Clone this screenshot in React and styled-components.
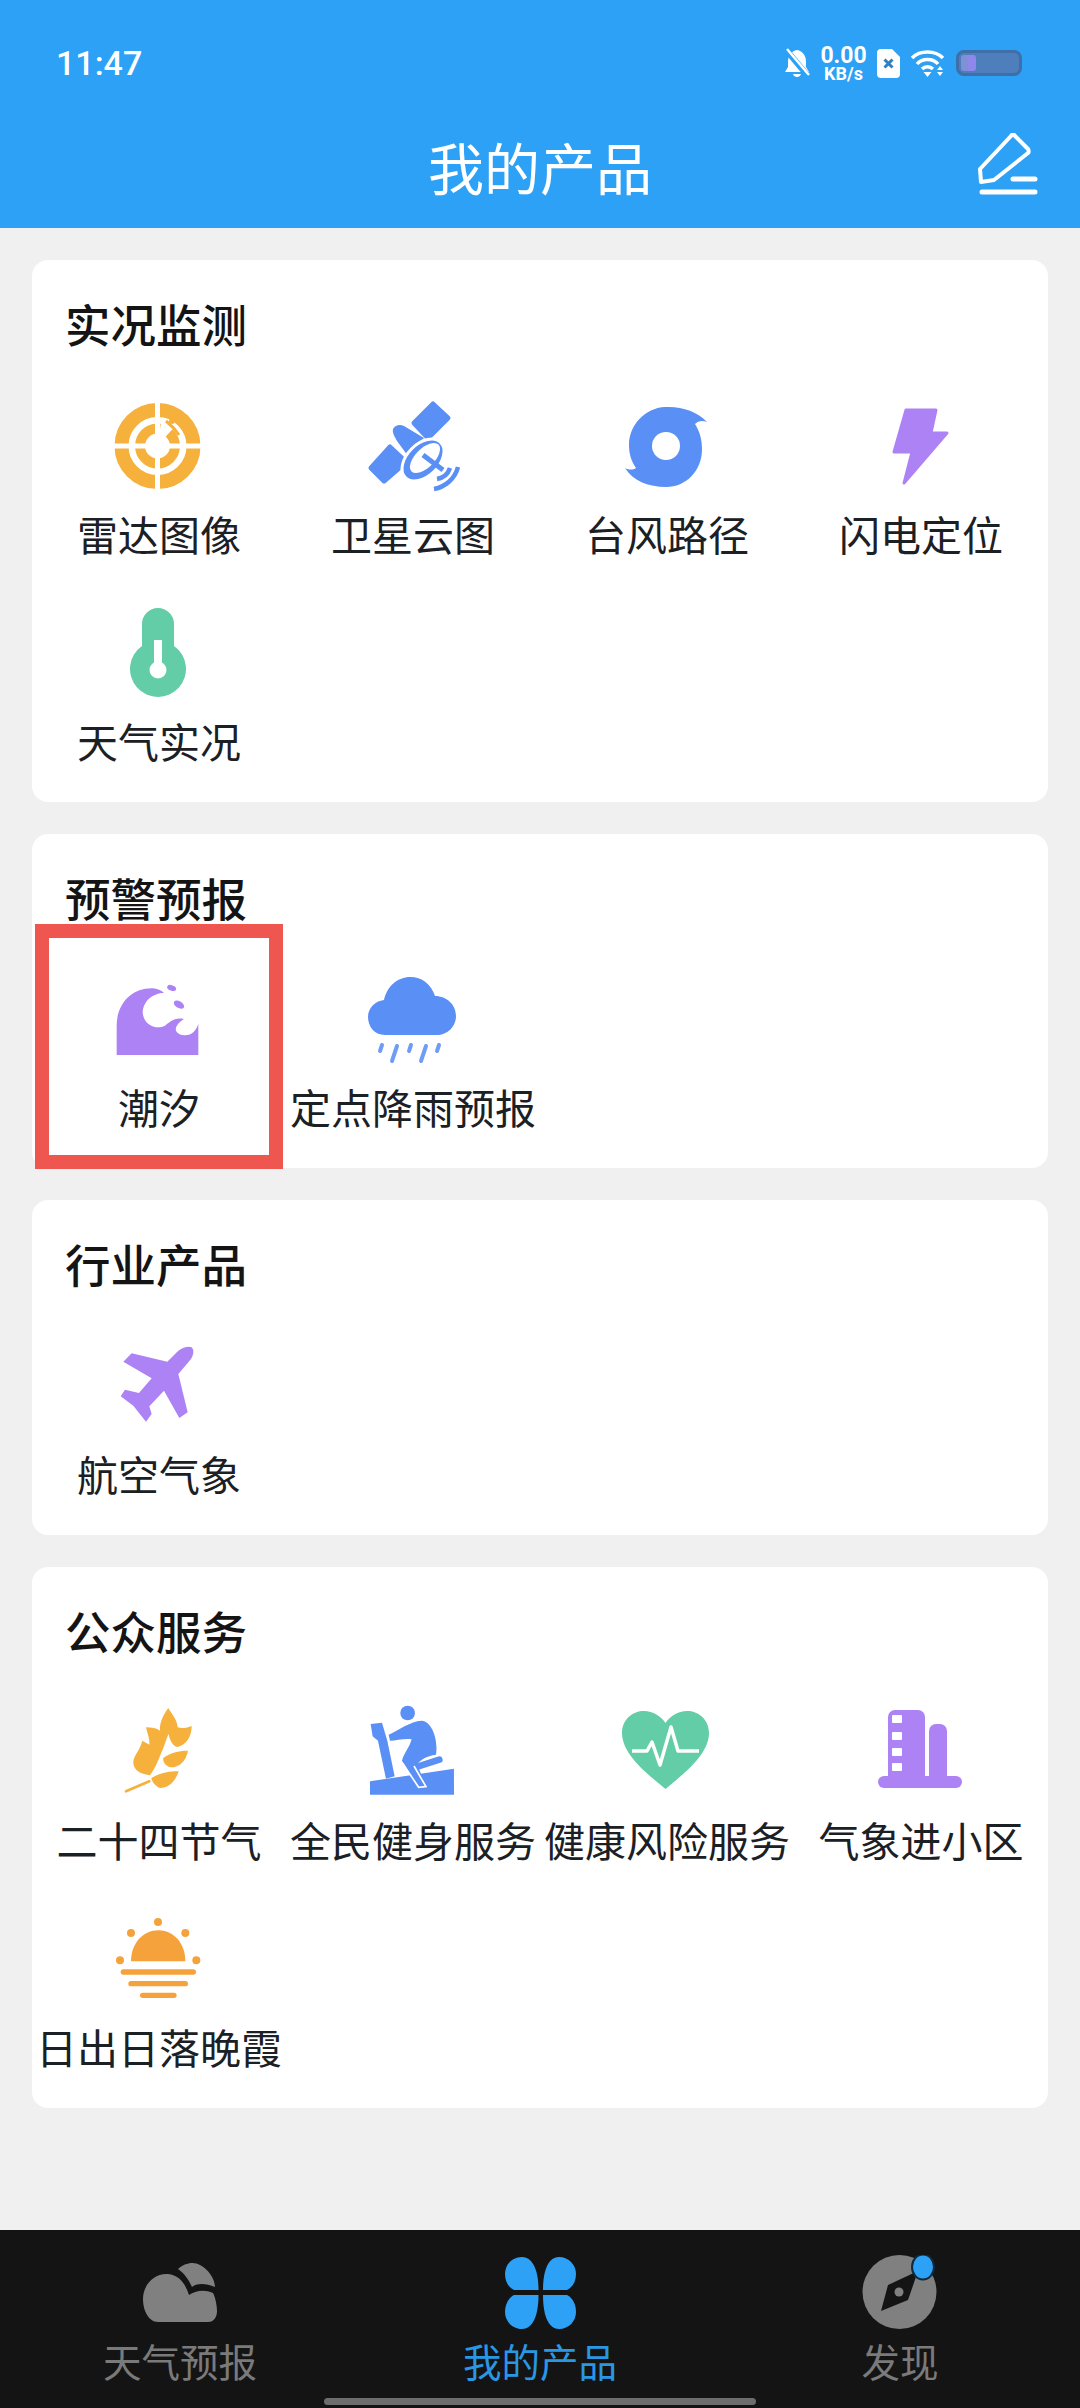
import React from 'react'
import styled, { createGlobalStyle } from 'styled-components'

const GlobalStyle = createGlobalStyle`
  html, body {
    margin: 0;
    padding: 0;
    background: #f0f0f0;
  }
  * {
    box-sizing: border-box;
  }
`

const Page = styled.div`
  width: 1080px;
  height: 2408px;
  display: flex;
  flex-direction: column;
  overflow: hidden;
  font-family: 'Noto Sans CJK SC', 'Noto Sans', sans-serif;
`

const Header = styled.header`
  height: 228px;
  flex-shrink: 0;
  background: #2ca1f6;
  color: white;
`

const StatusBar = styled.div`
  height: 126px;
  padding: 0 58px 0 56px;
  display: flex;
  align-items: center;
  justify-content: space-between;
`

const Clock = styled.div`
  font-family: Roboto, sans-serif;
  font-weight: 500;
  font-size: 34px;
`

const StatusIcons = styled.div`
  display: flex;
  align-items: center;
  gap: 11px;
`

const Speed = styled.div`
  width: 45px;
  display: flex;
  flex-direction: column;
  align-items: center;
  font-family: Roboto, sans-serif;
  font-weight: 700;
  font-size: 23px;
  line-height: 21px;

  span {
    font-size: 18px;
    line-height: 16px;
  }
`

const Battery = styled.div`
  width: 66px;
  height: 26px;
  padding: 2px;
  border: 3px solid #3f6fa9;
  border-radius: 8px;
  background: #4f7ebc;
`

const BatteryFill = styled.div`
  height: 100%;
  border-radius: 3px;
  background: linear-gradient(90deg, #7f90d4 50%, #8e87ec 50%);
`

const NavBar = styled.div`
  height: 80px;
  display: grid;
  grid-template-columns: 1fr auto 1fr;
  align-items: center;
`

const NavTitle = styled.h1`
  grid-column: 2;
  margin: 0;
  font-size: 56px;
  font-weight: 400;
  line-height: 80px;
`

const EditButton = styled.div`
  justify-self: end;
  margin-right: 42px;
  display: flex;
`

const Main = styled.main`
  flex: 1;
  padding: 32px 32px 0;
  display: flex;
  flex-direction: column;
  gap: 32px;
`

const Card = styled.section`
  background: white;
  border-radius: 16px;
`

const CardTitle = styled.h2`
  margin: 0;
  height: 127.5px;
  padding: 32px 0 0 33px;
  font-size: 45.5px;
  font-weight: 500;
  line-height: 62px;
  color: #141414;
`

const Grid = styled.div`
  display: grid;
  grid-template-columns: repeat(4, 254px);
  grid-auto-rows: 207px;
`

const Cell = styled.div`
  position: relative;
  padding-top: 11px;
  display: flex;
  flex-direction: column;
  align-items: center;
`

const CellLabel = styled.div`
  margin-top: 14px;
  font-size: 41px;
  line-height: 48px;
  white-space: nowrap;
  color: #1b2025;
`

const Highlight = styled.div`
  position: absolute;
  left: 3px;
  top: -37px;
  width: 248px;
  height: 245px;
  border: 14px solid #ef5650;
`

const TabBar = styled.nav`
  position: relative;
  height: 178px;
  flex-shrink: 0;
  padding-top: 25px;
  display: grid;
  grid-template-columns: repeat(3, 1fr);
  background: #141414;
`

const Tab = styled.div`
  display: flex;
  flex-direction: column;
  align-items: center;
  gap: 5px;
`

const TabLabel = styled.div`
  font-size: 38.5px;
  line-height: 48px;
  color: ${props => (props.active ? '#2a97e4' : '#7a7a7a')};
`

const HomeBar = styled.div`
  position: absolute;
  left: 324px;
  bottom: 3px;
  width: 432px;
  height: 7px;
  border-radius: 4px;
  background: #6d6d6d;
`

const ORANGE = '#f6b03c'
const BLUE = '#5a8ff5'
const PURPLE = '#ad82f5'
const GREEN = '#62cda6'

const Icon = ({ children }) => (
  <svg width='96' height='96' viewBox='0 0 96 96'>
    {children}
  </svg>
)

const RadarIcon = () => (
  <Icon>
    <circle cx='46.5' cy='47' r='36' fill='none' stroke={ORANGE} strokeWidth='14' />
    <circle cx='46.5' cy='47' r='17.5' fill='none' stroke={ORANGE} strokeWidth='10' />
    <path d='M46.5 2V92M2 47H92' stroke='white' strokeWidth='5' />
    <path d='M49 29.5A17.5 17.5 0 0 1 58 34' fill='none' stroke='white' strokeWidth='11' />
    <path d='M55 22C60 26 64 30 68 36' fill='none' stroke={ORANGE} strokeWidth='3' />
    <circle cx='61' cy='22' r='3' fill={ORANGE} />
  </Icon>
)

const SatelliteIcon = () => (
  <Icon>
    <path d='M68 5L83 19L63 39L49 24Z' fill={BLUE} stroke={BLUE} strokeWidth='5' strokeLinejoin='round' />
    <path d='M25 48L41 63L19 82L6 69Z' fill={BLUE} stroke={BLUE} strokeWidth='5' strokeLinejoin='round' />
    <path d='M28 30C30 26 35 25 39 27L59 39L43 57L32 42C30 38 27 34 28 30Z' fill={BLUE} />
    <ellipse cx='58' cy='61' rx='25' ry='16' transform='rotate(-45 58 61)' fill={BLUE} stroke='white' strokeWidth='3' />
    <ellipse cx='60' cy='59' rx='19' ry='9.5' transform='rotate(-45 60 59)' fill='white' />
    <path d='M58 56L78 71' stroke={BLUE} strokeWidth='5' />
    <path d='M72 80C78 79 83 75 85 69M69 90C80 88 90 80 93 68' fill='none' stroke={BLUE} strokeWidth='4.5' />
  </Icon>
)

const TyphoonIcon = () => (
  <Icon>
    <path
      d='M46 8C62 7 78 12 88 23C83 21 79 22 76 25C81 33 83 41 83 50C83 72 67 88 47 88C30 88 14 82 6 69C10 71 14 71 17 69C12 62 10 54 10 46C10 26 26 9 46 8Z'
      fill={BLUE}
    />
    <circle cx='47' cy='47' r='14' fill='white' />
  </Icon>
)

const BoltIcon = () => (
  <Icon>
    <path
      d='M33 11H63L58 34H74L31 84L39 53H21Z'
      fill={PURPLE}
      stroke={PURPLE}
      strokeWidth='3'
      strokeLinejoin='round'
    />
  </Icon>
)

const ThermometerIcon = () => (
  <Icon>
    <path
      d='M31 18A16 16 0 0 1 63 18V40A28 28 0 1 1 31 40Z'
      fill={GREEN}
    />
    <path d='M43 34H51V58H43Z' fill='white' />
    <circle cx='47' cy='64' r='8.5' fill='white' />
  </Icon>
)

const WaveIcon = () => (
  <Icon>
    <g transform='translate(-11 -3) scale(.3333)' fill={PURPLE}>
      <path d='M50 258V170C50 100 100 55 160 58C175 60 185 65 192 72C160 72 130 95 128 130C130 165 165 185 195 170C215 155 225 145 252 150C235 160 225 175 228 185C235 200 265 205 280 190C290 180 293 170 295 165V258Z' />
      <ellipse cx='215' cy='57' rx='14' ry='8' transform='rotate(20 215 57)' />
      <ellipse cx='237' cy='107' rx='17' ry='10' transform='rotate(30 237 107)' />
    </g>
  </Icon>
)

const RainIcon = () => (
  <Icon>
    <path
      d='M20 63C9 63 3 54 3 45C3 36 10 29 19 28C22 14 33 5 45 5C57 5 66 12 70 24C82 24 91 33 91 44C91 55 82 63 72 63Z'
      fill={BLUE}
    />
    <path
      d='M17 73L15 79M32 74L27 89M46 73L44 79M61 74L56 89M74 73L72 79'
      stroke='#6f9df5'
      strokeWidth='4'
      strokeLinecap='round'
    />
  </Icon>
)

const PlaneIcon = () => (
  <Icon>
    <g transform='translate(-51 -20) scale(.3333)'>
      <path
        d='M395 85C405 95 400 115 385 130L355 165L383 280L358 297L312 215L268 262L275 285L258 308L220 260L182 232L195 212L237 222L275 178L190 128L215 103L322 128L355 95C370 85 385 80 395 85Z'
        fill={PURPLE}
      />
    </g>
  </Icon>
)

const WheatIcon = () => (
  <Icon>
    <g transform='translate(-1 -7) scale(.3333)' fill={ORANGE}>
      <path d='M175 30C185 50 200 60 203 88C215 92 232 90 245 84C245 115 230 140 203 147C187 145 179 125 176 108C170 118 168 130 160 150C150 172 140 205 120 232C85 228 68 212 70 190C73 170 88 160 97 128L118 140C120 125 112 105 108 88C125 88 140 90 150 98C148 75 160 50 175 30Z' />
      <path d='M234 158C228 190 208 208 182 208C166 204 158 192 160 180C180 165 205 158 234 158Z' />
      <path d='M206 220C196 250 176 270 150 270C136 264 126 252 124 240C150 224 178 218 206 220Z' />
      <path d='M48 280L118 250' stroke={ORANGE} strokeWidth='8' strokeLinecap='round' />
    </g>
  </Icon>
)

const FitnessIcon = () => (
  <Icon>
    <g transform='translate(-255 -7) scale(.3333)' fill={BLUE}>
      <circle cx='893' cy='45' r='22' />
      <path d='M780 250L1032 212V290H780Z' />
      <path d='M782 78L816 74L832 128L854 235L828 242L804 128L788 115Z' />
      <path d='M836 110C870 95 900 70 935 68C968 70 985 130 978 170C950 174 928 186 922 200L948 264L922 264L876 188C882 165 898 150 905 124C885 120 860 128 840 128Z' />
      <path d='M925 205L988 185' stroke={BLUE} strokeWidth='20' strokeLinecap='round' />
      <path d='M912 204L948 266L926 268L878 196' stroke='white' strokeWidth='5' fill='none' />
    </g>
  </Icon>
)

const HeartIcon = () => (
  <Icon>
    <path
      d='M46.5 84C30 70 3 50 3 28C3 14 14 6 25 6C34 6 42 11 46.5 18C51 11 59 6 68 6C79 6 90 14 90 28C90 50 63 70 46.5 84Z'
      fill={GREEN}
    />
    <path
      d='M13 46H28L33 37L41 60L52 22L59 46H80'
      fill='none'
      stroke='white'
      strokeWidth='3.5'
      strokeLinejoin='round'
    />
  </Icon>
)

const BuildingIcon = () => (
  <Icon>
    <rect x='5' y='71' width='84' height='12' rx='6' fill={PURPLE} />
    <path d='M15 12A7 7 0 0 1 22 5H45A7 7 0 0 1 52 12V75H15Z' fill={PURPLE} />
    <path d='M56 26A7 7 0 0 1 63 19H67A7 7 0 0 1 74 26V75H56Z' fill={PURPLE} />
    <g fill='white'>
      <rect x='19' y='10' width='10' height='8' rx='1' />
      <rect x='19' y='27' width='10' height='8' rx='1' />
      <rect x='19' y='43' width='10' height='8' rx='1' />
      <rect x='19' y='58' width='10' height='8' rx='1' />
    </g>
  </Icon>
)

const SunsetIcon = () => (
  <Icon>
    <g transform='translate(-51 -14) scale(.3333)' fill='#f6a23c'>
      <circle cx='294' cy='72' r='12' />
      <circle cx='213' cy='105' r='12' />
      <circle cx='376' cy='105' r='12' />
      <circle cx='180' cy='187' r='12' />
      <circle cx='409' cy='187' r='12' />
      <path d='M213 190C213 135 250 97 295 97C340 97 376 135 376 190Z' />
      <path
        d='M190 222H400M213 257H376M248 292H342'
        stroke='#f6a23c'
        strokeWidth='16'
        strokeLinecap='round'
      />
    </g>
  </Icon>
)

const CloudTab = () => (
  <svg width='76' height='76' viewBox='0 0 76 76' fill='#808080'>
    <path d='M16 67C7 67 1 56 1 44C1 30 12 18 26 19C37 20 43 28 47 40C53 36 62 34 71 38C74 44 75 52 75 56C75 62 72 67 66 67Z' />
    <path d='M36 14C42 8 52 6 58 10C66 14 73 24 73 32C64 28 54 28 50 32C47 25 42 18 36 14Z' />
  </svg>
)

const CloverTab = () => (
  <svg width='76' height='76' viewBox='0 0 76 76' fill='#2ca1f6'>
    <path d='M20 2C30 2 36.5 14 36.5 35H12C6 32 3 26 3 19C3 10 10 2 20 2Z' />
    <path d='M57 2C47 2 41 14 41 35H65C71 32 74 26 74 19C74 10 67 2 57 2Z' />
    <path d='M20 74C30 74 36.5 62 36.5 40H12C6 43 3 50 3 57C3 66 10 74 20 74Z' />
    <path d='M57 74C47 74 41 62 41 40H65C71 43 74 50 74 57C74 66 67 74 57 74Z' />
  </svg>
)

const CompassTab = () => (
  <svg width='76' height='76' viewBox='0 0 76 76'>
    <circle cx='37.5' cy='37' r='37' fill='#808080' />
    <path d='M19 56L26 30L56 16L46 45Z' fill='#141414' />
    <circle cx='37' cy='37' r='4.5' fill='#808080' />
    <ellipse cx='61' cy='12' rx='11' ry='12.5' fill='#2ca1f6' stroke='#0f2a40' strokeWidth='2' />
  </svg>
)

const EditIcon = () => (
  <svg width='60' height='66' viewBox='0 0 60 66' fill='none' stroke='white' strokeLinecap='round'>
    <path
      d='M33 3C34 1 36 1 37 3L50 16C51 18 51 19 50 20L16 47L3 49L2 36Z'
      strokeWidth='4'
      strokeLinejoin='round'
    />
    <path d='M35 46H57M4 59H57' strokeWidth='5' />
  </svg>
)

const BellIcon = () => (
  <svg width='26' height='30' viewBox='0 0 26 30'>
    <path d='M13 2C7 3 4 8 4 14V19L1 24H25L22 19V14C22 8 19 3 13 2Z' fill='white' />
    <path d='M9 26H17C16 30 10 30 9 26Z' fill='white' />
    <path d='M3 3L24 28' stroke='#2ca1f6' strokeWidth='6' />
    <path d='M3 1L25 27' stroke='white' strokeWidth='2.5' />
  </svg>
)

const SimIcon = () => (
  <svg width='23' height='29' viewBox='0 0 23 29'>
    <path d='M4 0H15L23 8V25A4 4 0 0 1 19 29H4A4 4 0 0 1 0 25V4A4 4 0 0 1 4 0Z' fill='white' />
    <path d='M7.5 10.5L15.5 18.5M15.5 10.5L7.5 18.5' stroke='#2f7fc4' strokeWidth='3' />
  </svg>
)

const WifiIcon = () => (
  <svg width='34' height='27' viewBox='0 0 34 27' fill='none' stroke='white' strokeWidth='3.5'>
    <path d='M1 8C9 0 24 0 32 8M6 14C11 8 22 8 27 14M11 19C14 16 19 16 22 19' />
    <path d='M12.5 22H20.5L16.5 27Z' fill='white' stroke='none' />
    <path d='M26 20L29 16L32 20ZM26 22H32L29 26Z' fill='white' stroke='none' />
  </svg>
)

const sections = [
  {
    title: '实况监测',
    items: [
      ['雷达图像', RadarIcon],
      ['卫星云图', SatelliteIcon],
      ['台风路径', TyphoonIcon],
      ['闪电定位', BoltIcon],
      ['天气实况', ThermometerIcon]
    ]
  },
  {
    title: '预警预报',
    items: [
      ['潮汐', WaveIcon, true],
      ['定点降雨预报', RainIcon]
    ]
  },
  {
    title: '行业产品',
    items: [['航空气象', PlaneIcon]]
  },
  {
    title: '公众服务',
    items: [
      ['二十四节气', WheatIcon],
      ['全民健身服务', FitnessIcon],
      ['健康风险服务', HeartIcon],
      ['气象进小区', BuildingIcon],
      ['日出日落晚霞', SunsetIcon]
    ]
  }
]

export default function App() {
  return (
    <Page>
      <GlobalStyle />
      <Header>
        <StatusBar>
          <Clock>11:47</Clock>
          <StatusIcons>
            <BellIcon />
            <Speed>
              0.00
              <span>KB/s</span>
            </Speed>
            <SimIcon />
            <WifiIcon />
            <Battery>
              <BatteryFill style={{ width: '27%' }} />
            </Battery>
          </StatusIcons>
        </StatusBar>
        <NavBar>
          <NavTitle>我的产品</NavTitle>
          <EditButton>
            <EditIcon />
          </EditButton>
        </NavBar>
      </Header>
      <Main>
        {sections.map(section => (
          <Card key={section.title}>
            <CardTitle>{section.title}</CardTitle>
            <Grid>
              {section.items.map(([label, ItemIcon, marked]) => (
                <Cell key={label}>
                  <ItemIcon />
                  <CellLabel>{label}</CellLabel>
                  {marked && <Highlight />}
                </Cell>
              ))}
            </Grid>
          </Card>
        ))}
      </Main>
      <TabBar>
        <Tab>
          <CloudTab />
          <TabLabel>天气预报</TabLabel>
        </Tab>
        <Tab>
          <CloverTab />
          <TabLabel active>我的产品</TabLabel>
        </Tab>
        <Tab>
          <CompassTab />
          <TabLabel>发现</TabLabel>
        </Tab>
        <HomeBar />
      </TabBar>
    </Page>
  )
}
